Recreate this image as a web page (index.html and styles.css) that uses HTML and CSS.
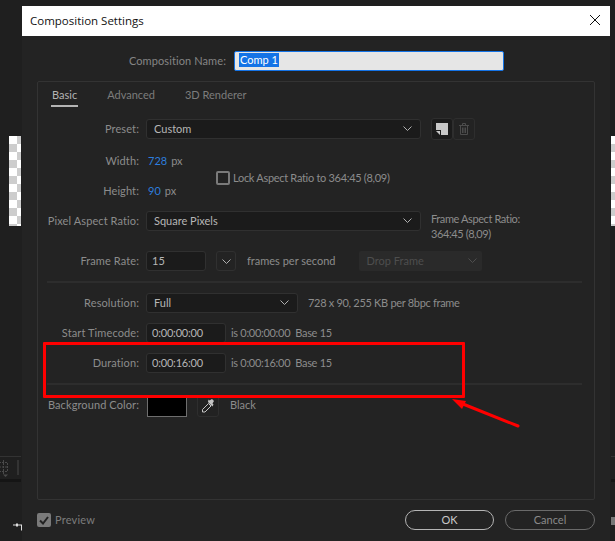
FILE: index.html
```html
<!DOCTYPE html>
<html lang="en">
<head>
    <meta charset="UTF-8">
    <title>Composition Settings</title>
    <link rel="stylesheet" href="styles.css">
</head>
<body>
    <!-- what shows of the app behind the dialog -->
    <div class="checker checker-left"></div>
    <div class="checker checker-right"></div>
    <div class="back-line back-line-left"></div>
    <div class="back-band back-band-left"></div>
    <div class="back-line back-line-right"></div>
    <div class="back-band back-band-right"></div>
    <div class="back-block"></div>
    <svg class="back-icon" width="10" height="18" viewBox="0 0 10 18" fill="none" stroke="#4a4a4a">
        <path d="M-1 2.500h8.500v9h-8.500M3.500 0v14M-1 7h9" stroke-dasharray="2 1"/>
        <path d="M3 14.500h5l-2.500 2.500z" fill="#4a4a4a" stroke="none"/>
    </svg>
    <div class="back-divider"></div>
    <svg class="back-cursor" width="10" height="8" viewBox="0 0 10 8">
        <path d="M1 1.500h3v-1h2v1h4v6h-1v-5h-3v1h-2v-1h-3z" fill="#e0e0e0"/>
    </svg>

    <div class="dialog">
        <div class="titlebar">
            <span>Composition Settings</span>
            <svg width="12" height="12" viewBox="0 0 12 12" stroke="#111" fill="none">
                <path d="M1 1l10 10M11 1l-10 10"/>
            </svg>
        </div>

        <div class="dialog-body">
            <div class="name-row">
                <label class="name-label">Composition Name:</label>
                <div class="name-input"><span class="selected">Comp 1</span></div>
            </div>

            <div class="panel">
                <div class="tabs">
                    <span class="tab active">Basic</span>
                    <span class="tab">Advanced</span>
                    <span class="tab">3D Renderer</span>
                </div>

                <div class="row preset-row">
                    <label class="label">Preset:</label>
                    <div class="field select wide"><span>Custom</span>
                        <svg class="chevron" width="9" height="5" viewBox="0 0 9 5"><path d="M.5.500l4 4 4-4"/></svg>
                    </div>
                    <div class="icon-buttons">
                        <div class="icon-btn">
                            <svg width="12" height="12" viewBox="0 0 12 12">
                                <path d="M0 0h12v12h-7v-5h-5z" fill="#c8c8c8"/>
                                <path d="M0 8h4v4z" fill="#c8c8c8"/>
                            </svg>
                        </div>
                        <div class="icon-btn">
                            <svg width="10" height="12" viewBox="0 0 10 12" fill="none" stroke="#4c4c4c">
                                <path d="M0 2.500h10M3.500 2v-1.500h3v1.500M1.500 3v8.500h7v-8.500M3.500 4.500v5.500M5 4.500v5.500M6.500 4.500v5.500"/>
                            </svg>
                        </div>
                    </div>
                </div>

                <div class="dims">
                    <div class="dims-rows">
                        <div class="row">
                            <label class="label">Width:</label>
                            <span class="number">728</span><span class="unit">px</span>
                        </div>
                        <div class="row">
                            <label class="label">Height:</label>
                            <span class="number">90</span><span class="unit">px</span>
                        </div>
                    </div>
                    <div class="lock">
                        <span class="checkbox"></span>
                        <span class="lock-text">Lock Aspect Ratio to 364:45 (8,09)</span>
                    </div>
                </div>

                <div class="row par-row">
                    <label class="label">Pixel Aspect Ratio:</label>
                    <div class="field select wide"><span>Square Pixels</span>
                        <svg class="chevron" width="9" height="5" viewBox="0 0 9 5"><path d="M.5.500l4 4 4-4"/></svg>
                    </div>
                    <div class="frame-aspect">Frame Aspect Ratio:<br>364:45 (8,09)</div>
                </div>

                <div class="row rate-row">
                    <label class="label">Frame Rate:</label>
                    <div class="field rate-input">15</div>
                    <div class="field rate-arrow">
                        <svg class="chevron" width="9" height="5" viewBox="0 0 9 5"><path d="M.5.500l4 4 4-4"/></svg>
                    </div>
                    <span class="text fps">frames per second</span>
                    <div class="drop-frame"><span>Drop Frame</span>
                        <svg class="chevron" width="9" height="5" viewBox="0 0 9 5"><path d="M.5.500l4 4 4-4"/></svg>
                    </div>
                </div>

                <div class="separator"></div>

                <div class="row sep-after">
                    <label class="label">Resolution:</label>
                    <div class="field select res-select"><span>Full</span>
                        <svg class="chevron" width="9" height="5" viewBox="0 0 9 5"><path d="M.5.500l4 4 4-4"/></svg>
                    </div>
                    <span class="text res-info">728 x 90, 255 KB per 8bpc frame</span>
                </div>

                <div class="row sep-after">
                    <label class="label">Start Timecode:</label>
                    <div class="field time-input">0:00:00:00</div>
                    <span class="text time-info">is 0:00:00:00&nbsp; Base 15</span>
                </div>

                <div class="row sep-after">
                    <label class="label">Duration:</label>
                    <div class="field time-input">0:00:16:00</div>
                    <span class="text time-info">is 0:00:16:00&nbsp; Base 15</span>
                </div>

                <div class="separator"></div>

                <div class="row bg-row">
                    <label class="label">Background Color:</label>
                    <div class="swatch"></div>
                    <div class="eyedropper">
                        <svg width="16" height="16" viewBox="0 0 16 16" fill="none">
                            <path d="M8.500 5.500l2.500 2.500-6 6h-2.500v-2.500z" stroke="#c4c4c4"/>
                            <path d="M8 4l4.500 4.500 1-2-1-1 1.500-2.500-2-2-2.500 1.500-1-1z" fill="#c4c4c4"/>
                        </svg>
                    </div>
                    <span class="text bg-name">Black</span>
                </div>
            </div>

            <div class="footer">
                <div class="preview">
                    <span class="checkbox checked">
                        <svg width="10" height="9" viewBox="0 0 10 9" fill="none" stroke="#222" stroke-width="2">
                            <path d="M1 4.500l3 3 5-6.500"/>
                        </svg>
                    </span>
                    <span class="preview-text">Preview</span>
                </div>
                <div class="buttons">
                    <div class="btn btn-ok">OK</div>
                    <div class="btn">Cancel</div>
                </div>
            </div>
        </div>
    </div>

    <!-- annotation drawn on top of the screenshot -->
    <div class="red-box"></div>
    <svg class="red-arrow" width="80" height="40" viewBox="0 0 80 40">
        <path d="M70 28l-55-22" stroke="#f00" stroke-width="3" stroke-linecap="round"/>
        <path d="M4 1l14 2-4 8z" fill="#f00"/>
    </svg>
</body>
</html>
```

FILE: styles.css
```css
html, body {
    margin: 0;
    height: 100%;
}
body {
    position: relative;
    width: 615px;
    height: 541px;
    overflow: hidden;
    background: #1f1f1f;
    font-family: "Lato", sans-serif;
    font-size: 11px;
    color: #8c8c8c;
}

/* behind the dialog */
.checker {
    position: absolute;
    top: 136px;
    height: 90px;
    background: repeating-conic-gradient(#cdcdcd 0 25%, #fff 0 50%) 0 0 / 16px 16px;
}
.checker-left {
    left: 9px;
    width: 12px;
}
.checker-right {
    left: 611px;
    width: 4px;
}
.back-line, .back-band {
    position: absolute;
}
.back-line {
    top: 456px;
    height: 1px;
    background: #333;
}
.back-band {
    top: 479px;
    height: 3px;
    background: #151515;
}
.back-line-left, .back-band-left {
    left: 0;
    width: 21px;
}
.back-line-right, .back-band-right {
    left: 611px;
    width: 4px;
}
.back-block {
    position: absolute;
    left: 611px;
    top: 517px;
    width: 4px;
    height: 8px;
    background: #777;
}
.back-icon {
    position: absolute;
    left: 0;
    top: 460px;
}
.back-divider {
    position: absolute;
    left: 17px;
    top: 460px;
    width: 2px;
    height: 15px;
    background: #333;
}
.back-cursor {
    position: absolute;
    left: 12px;
    top: 523px;
}

/* dialog */
.dialog {
    position: absolute;
    left: 22px;
    top: 6px;
    width: 588px;
    height: 535px;
    background: #232323;
}
.titlebar {
    display: flex;
    align-items: center;
    justify-content: space-between;
    box-sizing: border-box;
    height: 30px;
    padding: 0 9px 2px 8px;
    background: #fff;
    color: #111;
    font-family: "Open Sans", sans-serif;
    font-size: 11.5px;
}
.dialog-body {
    padding: 15px 15px 0;
}
.name-row {
    display: flex;
    align-items: center;
    height: 20px;
}
.name-label {
    width: 189px;
    padding-bottom: 2px;
    text-align: right;
    letter-spacing: .1px;
    color: #858585;
}
.name-input {
    box-sizing: border-box;
    display: flex;
    align-items: center;
    width: 270px;
    height: 20px;
    margin-left: 8px;
    padding: 0 0 2px 4px;
    background: #e6e6e6;
    border: 1px solid #1473e6;
    border-radius: 2px;
}
.selected {
    background: #1473e6;
    color: #fff;
    padding: 0 1px;
    line-height: 14px;
}

.panel {
    box-sizing: border-box;
    height: 419px;
    margin-top: 10px;
    border: 1px solid #333;
    border-radius: 2px;
}
.tabs {
    display: flex;
    gap: 28px;
    height: 25px;
    padding-left: 13px;
}
.tab {
    box-sizing: border-box;
    height: 25px;
    padding: 6px 1px 0;
    color: #7c7c7c;
}
.tab.active {
    color: #b4b4b4;
    border-bottom: 2px solid #b4b4b4;
}

.row {
    display: flex;
    align-items: center;
    height: 20px;
}
.label {
    flex: none;
    width: 101px;
    margin-right: 1px;
    padding-bottom: 2px;
    text-align: right;
    letter-spacing: .1px;
}
.field {
    box-sizing: border-box;
    display: flex;
    align-items: center;
    height: 20px;
    padding: 0 0 2px 5px;
    background: #1b1b1b;
    border: 1px solid #303030;
    border-radius: 3px;
    color: #b6b6b6;
}
.select {
    justify-content: space-between;
    padding: 0 8px 2px 7px;
}
.chevron {
    fill: none;
    stroke: #b0b0b0;
}
.wide {
    width: 275px;
    margin-left: 6px;
}
.preset-row {
    margin-top: 12px;
}
.icon-buttons {
    display: flex;
    margin-left: 10px;
}
.icon-btn {
    box-sizing: border-box;
    display: flex;
    align-items: center;
    justify-content: center;
    width: 22px;
    height: 22px;
    border: 1px solid #2e2e2e;
    border-radius: 3px;
}
.icon-btn:first-child {
    background: #1b1b1b;
}

.dims {
    display: flex;
    align-items: center;
    margin-top: 12px;
}
.dims-rows {
    display: flex;
    flex-direction: column;
    gap: 10px;
    width: 178px;
}
.number {
    margin-left: 8px;
    padding-bottom: 2px;
    color: #2d7ddc;
}
.unit {
    margin-left: 4px;
    padding-bottom: 2px;
}
.lock {
    display: flex;
    align-items: center;
    gap: 3px;
    margin-top: 4px;
    white-space: nowrap;
}
.lock-text {
    padding-bottom: 2px;
    letter-spacing: -.3px;
}
.checkbox {
    box-sizing: border-box;
    width: 14px;
    height: 14px;
    border: 2px solid #7a7a7a;
    border-radius: 2px;
}
.checkbox.checked {
    display: flex;
    align-items: center;
    justify-content: center;
    background: #7a7a7a;
}

.par-row {
    margin-top: 10px;
}
.frame-aspect {
    align-self: flex-start;
    margin-left: 10px;
    line-height: 15px;
    letter-spacing: -.4px;
    white-space: nowrap;
}
.rate-row {
    margin-top: 20px;
}
.rate-input {
    width: 60px;
    margin-left: 6px;
}
.rate-arrow {
    justify-content: center;
    width: 20px;
    margin-left: 10px;
    padding: 0;
    background: #232323;
}
.text {
    padding-bottom: 2px;
    white-space: nowrap;
}
.fps {
    margin-left: 11px;
}
.drop-frame {
    box-sizing: border-box;
    display: flex;
    align-items: center;
    justify-content: space-between;
    width: 123px;
    height: 20px;
    margin-left: 23px;
    padding: 0 5px 2px 8px;
    background: #2a2a2a;
    border-radius: 2px;
    color: #4e4e4e;
}
.drop-frame .chevron {
    stroke: #4e4e4e;
}

.separator {
    height: 2px;
    margin: 10px 12px 0 9px;
    background: #2d2d2d;
}
.sep-after {
    margin-top: 10px;
}
.res-select {
    width: 152px;
    margin-left: 6px;
}
.res-info {
    margin-left: 10px;
    letter-spacing: -.3px;
}
.time-input {
    width: 80px;
    margin-left: 6px;
    letter-spacing: -.2px;
}
.time-info {
    margin-left: 5px;
    letter-spacing: -.3px;
}

.bg-row {
    height: 22px;
    margin-top: 10px;
}
.bg-row .label, .bg-row .text {
    padding-bottom: 4px;
}
.swatch {
    box-sizing: border-box;
    width: 40px;
    height: 22px;
    margin-left: 7px;
    background: #000;
    border: 1px solid #6e6e6e;
}
.eyedropper {
    box-sizing: border-box;
    display: flex;
    align-items: center;
    justify-content: center;
    width: 22px;
    height: 22px;
    margin-left: 10px;
    background: #222;
    border: 1px solid #2e2e2e;
    border-radius: 3px;
}
.bg-name {
    margin-left: 11px;
}

.footer {
    display: flex;
    align-items: center;
    justify-content: space-between;
    margin-top: 10px;
}
.preview {
    display: flex;
    align-items: center;
    gap: 4px;
    color: #7c7c7c;
}
.preview-text {
    padding-bottom: 2px;
    letter-spacing: .2px;
}
.buttons {
    display: flex;
    gap: 11px;
}
.btn {
    box-sizing: border-box;
    display: flex;
    align-items: center;
    justify-content: center;
    width: 90px;
    height: 20px;
    padding-bottom: 2px;
    border: 1px solid #6a6a6a;
    border-radius: 10px;
    color: #8a8a8a;
}
.btn-ok {
    width: 89px;
    border-color: #b4b4b4;
    color: #c8c8c8;
}

/* annotation */
.red-box {
    position: absolute;
    left: 43px;
    top: 342px;
    width: 416px;
    height: 50px;
    border: 3px solid #f00;
    border-radius: 1px;
}
.red-arrow {
    position: absolute;
    left: 448px;
    top: 398px;
}
```
